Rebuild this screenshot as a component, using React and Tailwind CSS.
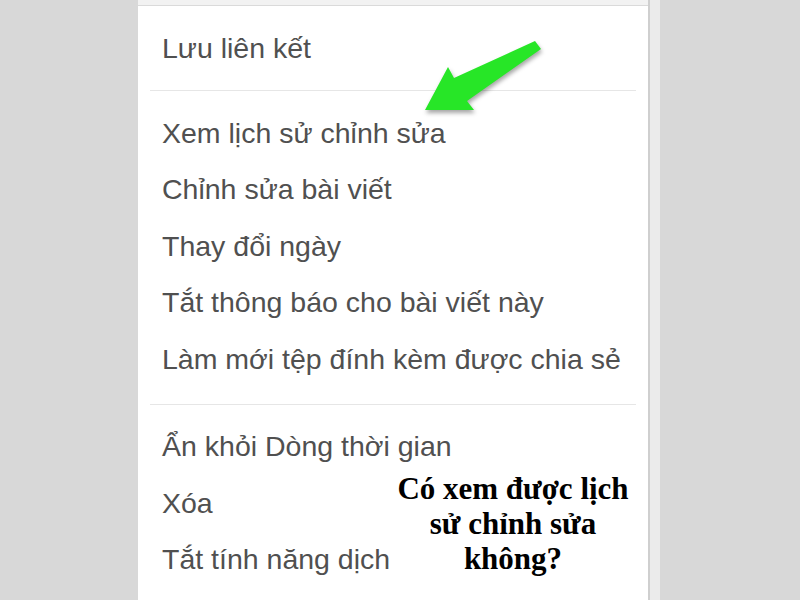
import React from 'react';

const groups = [
    ['Lưu liên kết'],
    ['Xem lịch sử chỉnh sửa', 'Chỉnh sửa bài viết', 'Thay đổi ngày', 'Tắt thông báo cho bài viết này', 'Làm mới tệp đính kèm được chia sẻ'],
    ['Ẩn khỏi Dòng thời gian', 'Xóa', 'Tắt tính năng dịch'],
];

const Item = ({ label }) => (
    <div className="h-[56.5px] flex items-center pl-[24px] text-[28.5px] text-[#505050] whitespace-nowrap">
        {label}
    </div>
);

const App = () => {
    return (
        <div className="relative w-[800px] h-[600px] overflow-hidden bg-[#d8d8d8] flex" style={{ fontFamily: '"Liberation Sans", Arial, sans-serif' }}>
            <div className="w-[138px] shrink-0"></div>

            {/* menu panel */}
            <div className="w-[512px] shrink-0 bg-white border-r-2 border-[#cfcfcf] flex flex-col">
                <div className="h-[6px] bg-[#f2f2f2] border-b border-[#dadada]"></div>
                <div className="h-[84px] flex items-center pl-[24px] text-[28.5px] text-[#505050]">{groups[0][0]}</div>
                <div className="mx-[12px] border-t border-[#e6e6e6]"></div>
                <div className="pt-[14px] pb-[16px]">
                    {groups[1].map(l => <Item key={l} label={l} />)}
                </div>
                <div className="mx-[12px] border-t border-[#e6e6e6]"></div>
                <div className="pt-[14px]">
                    {groups[2].map(l => <Item key={l} label={l} />)}
                </div>
            </div>
            <div className="w-[10px] shrink-0 bg-[#ebebeb]"></div>

            {/* green arrow */}
            <svg className="absolute left-[400px] top-[30px]" width="160" height="90" viewBox="0 0 160 90" style={{ filter: 'drop-shadow(1px 3px 2px rgba(0,0,0,0.35))' }}>
                <polygon points="25,80 48,37 54,48 135,11 141,19 67,71 74,80" fill="#27e627" />
            </svg>

            {/* caption */}
            <div className="absolute left-[370px] top-[471px] w-[286px] text-center font-bold text-[31px] leading-[35px] text-black" style={{ fontFamily: '"Liberation Serif", "Times New Roman", serif' }}>
                Có xem được lịch<br />sử chỉnh sửa<br />không?
            </div>
        </div>
    );
};

export default App;
